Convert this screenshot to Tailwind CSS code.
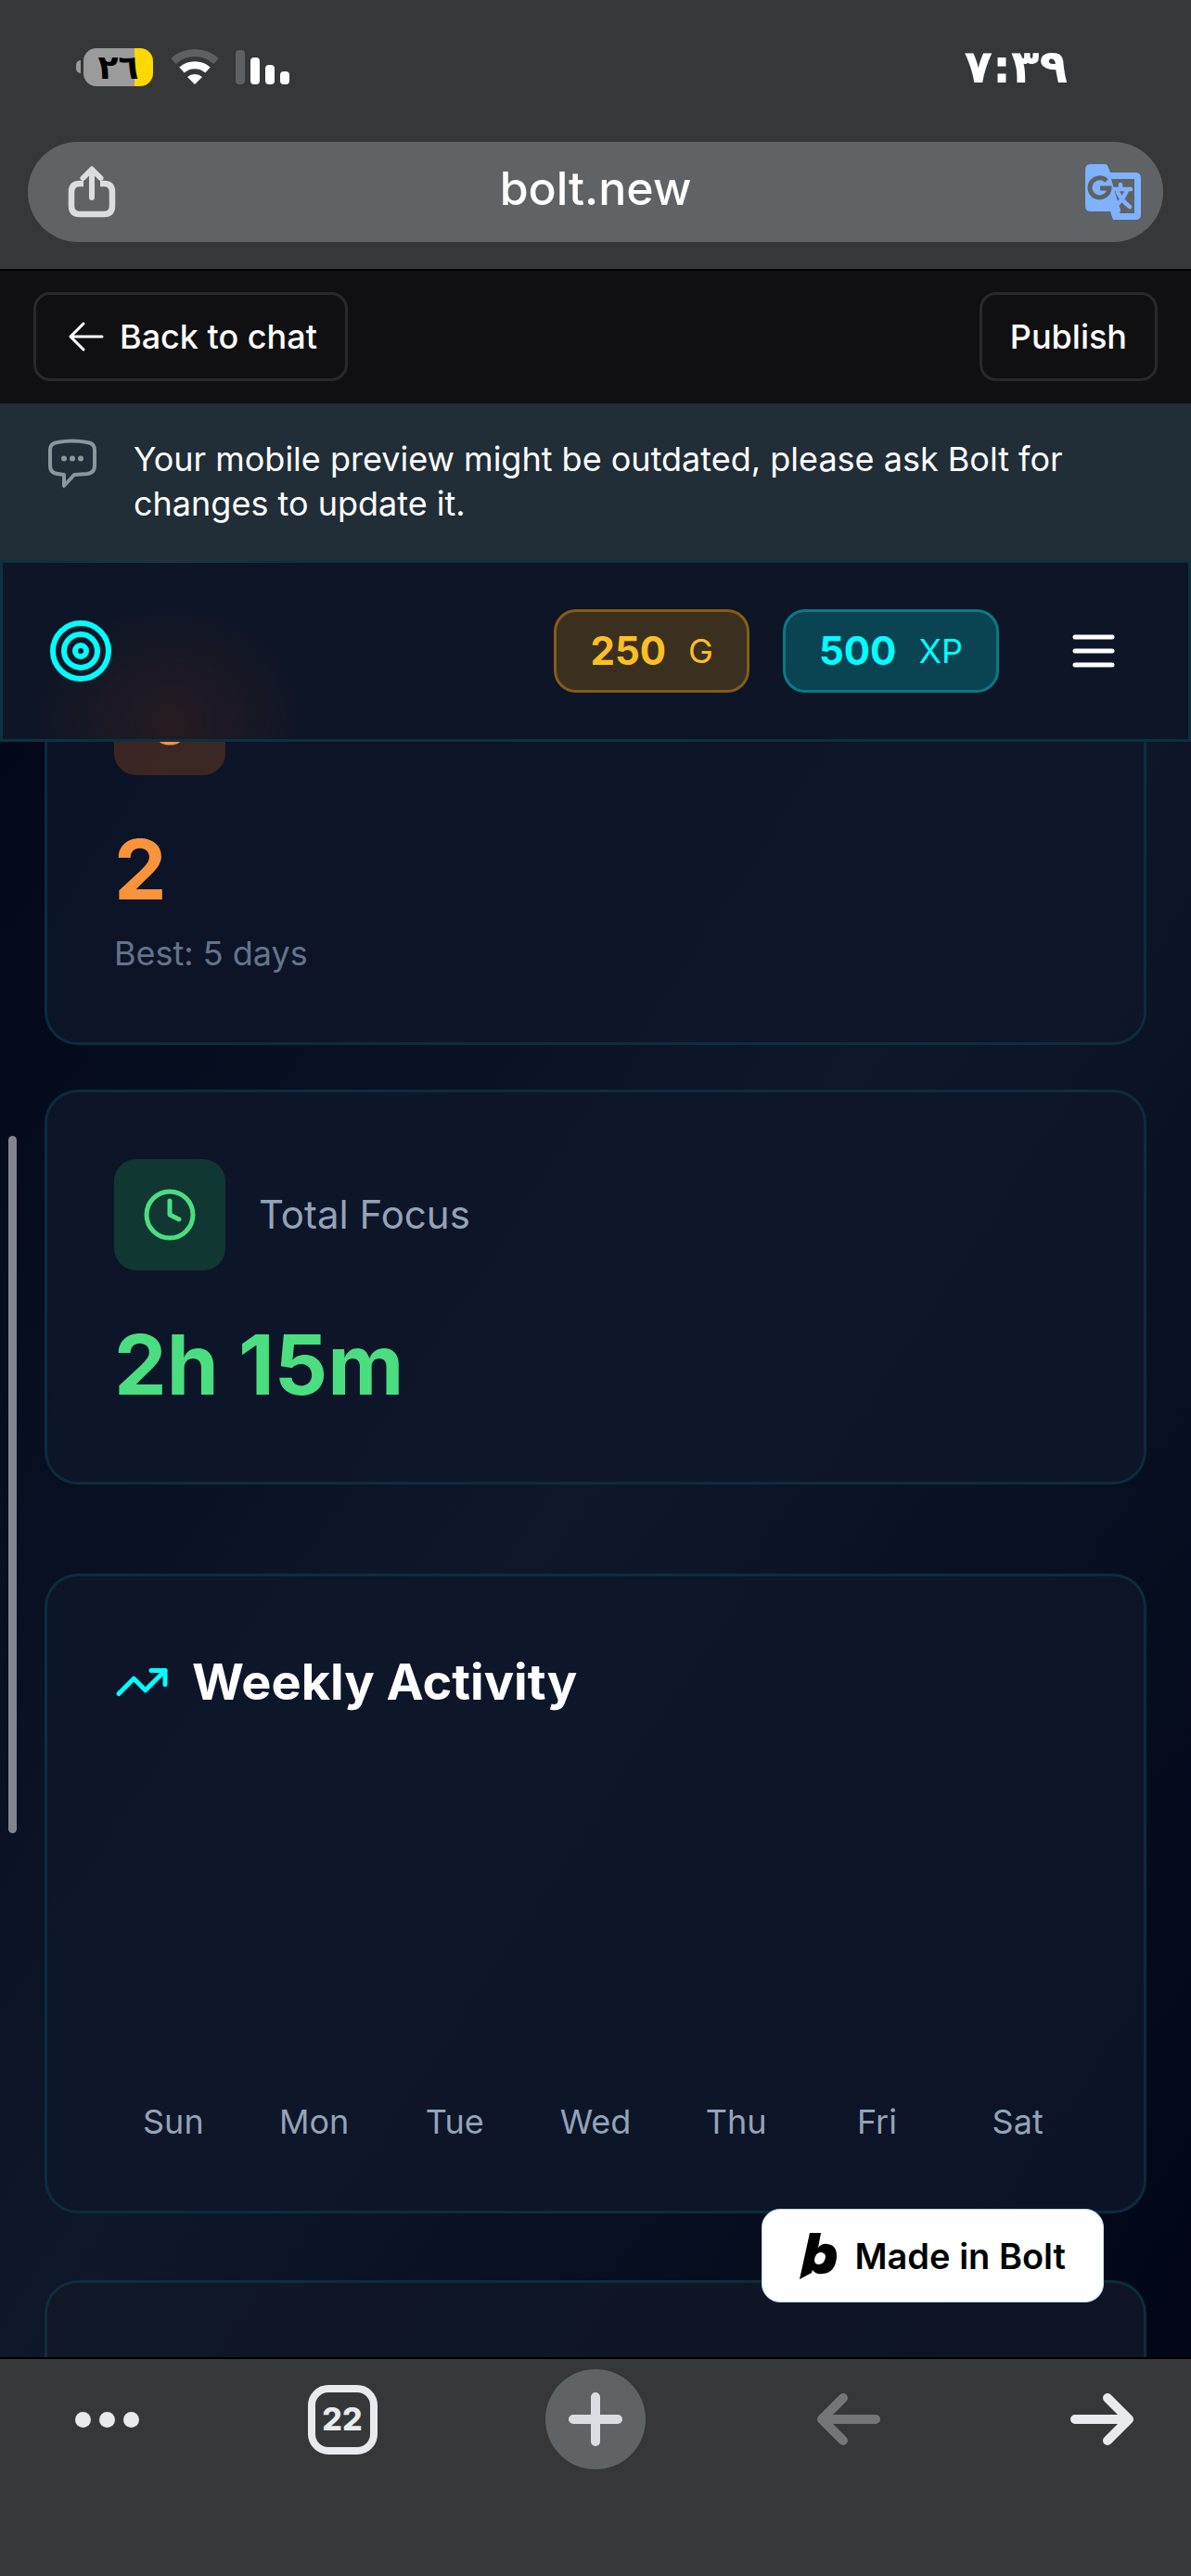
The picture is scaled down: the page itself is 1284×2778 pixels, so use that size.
<!DOCTYPE html>
<html lang="en">
<head>
    <meta charset="UTF-8">
    <meta name="viewport" content="width=device-width, initial-scale=1.0">
    <title>bolt.new</title>
    <script src="https://cdn.jsdelivr.net/npm/@tailwindcss/browser@4"></script>
</head>
<body class="bg-[#020617] font-['Inter','Liberation_Sans',sans-serif] text-white">
    <div class="flex h-screen flex-col overflow-hidden">

        <!-- Browser top: status bar + address bar -->
        <div class="border-b-2 border-black bg-[#353738] px-[30px] pb-[29px]">
            <div class="flex h-36 items-center justify-between pr-[103px] pl-[52px] font-['DejaVu_Sans',sans-serif] font-bold">
                <div class="flex items-center">
                    <span class="mr-[3px] h-[14px] w-[5px] rounded-l-full bg-[#9b9b9c]"></span>
                    <span class="flex h-[41px] w-[75px] items-center justify-center overflow-hidden rounded-[14px] bg-linear-to-r from-[#9b9b9c] from-73% to-[#ffd800] to-73% text-[36px] leading-[41px] text-black">٢٦</span>
                    <svg class="ml-[19px] h-[40px] w-[52px]" viewBox="0 0 52 40" fill="none">
                        <path d="M3 14 A34 34 0 0 1 49 14" stroke="#5f6061" stroke-width="8"/>
                        <path d="M12 23.500 A21 21 0 0 1 40 23.500" stroke="#fff" stroke-width="8"/>
                        <path d="M26 39 L18 31 A12 12 0 0 1 34 31 Z" fill="#fff"/>
                    </svg>
                    <div class="ml-[18px] flex items-end gap-[6px]">
                        <span class="h-[37px] w-[10px] rounded-[4px] bg-[#5f6061]"></span>
                        <span class="h-[29px] w-[10px] rounded-[4px] bg-white"></span>
                        <span class="h-[21px] w-[10px] rounded-[4px] bg-white"></span>
                        <span class="h-[14px] w-[10px] rounded-[4px] bg-white"></span>
                    </div>
                </div>
                <span class="text-[50px] leading-[56px]">٧:٣٩</span>
            </div>
            <div class="mt-[9px] flex h-[108px] items-center justify-between rounded-full bg-[#5f6365] pr-6 pl-[42px]">
                <button aria-label="Share">
                    <svg class="h-[58px] w-[54px]" viewBox="0 0 54 58" fill="none" stroke="#dadde1" stroke-width="6.500" stroke-linecap="round" stroke-linejoin="round">
                        <path d="M18 20 H14 Q5 20 5 29 V44 Q5 53 14 53 H40 Q49 53 49 44 V29 Q49 20 40 20 H36" stroke-linecap="butt"/>
                        <path d="M27 35 V5 M17.500 14 L27 4.500 L36.500 14" stroke-width="6"/>
                    </svg>
                </button>
                <input type="text" value="bolt.new" aria-label="Address" class="min-w-0 flex-1 bg-transparent pr-3 pb-2 text-center text-[50px] leading-[60px] font-medium outline-none">
                <button aria-label="Translate">
                    <svg class="h-[60px] w-[60px]" viewBox="0 0 60 60" fill="none">
                        <path d="M6 0 H21 Q24 0 25 4 L27 9 H54 Q60 9 60 15 V54 Q60 60 54 60 H30 L27 51 H6 Q0 51 0 45 V6 Q0 0 6 0 Z" fill="#7fb2fc"/>
                        <path d="M28 16 H53 V53 H37 L38 50 L34 38 Z" fill="#5f6365"/>
                        <path d="M28 18 L38 50 L27 51 Z" fill="#7fb2fc"/>
                        <path d="M38 22 V25 M30 27 H49 M45 28 Q42 36 35 43 M35 30 Q39 39 48 46" stroke="#7fb2fc" stroke-width="4.500" stroke-linecap="round"/>
                        <path d="M23 18 A10.500 10.500 0 1 0 26 26 H16" stroke="#5f6365" stroke-width="5"/>
                    </svg>
                </button>
            </div>
        </div>

        <!-- Preview toolbar -->
        <div class="flex items-center justify-between bg-[#101012] px-9 pt-[23px] pb-6 text-[36px] leading-[48px] font-medium">
            <button class="flex h-24 items-center gap-[15px] rounded-[18px] border-3 border-[#29292b] pr-[30px] pl-[33px]">
                <svg class="h-[42px] w-[42px]" viewBox="0 0 42 42" fill="none" stroke="currentColor" stroke-width="3" stroke-linecap="round" stroke-linejoin="round">
                    <path d="M38 21 H4 M18 7 L4 21 L18 35"/>
                </svg>
                Back to chat
            </button>
            <button class="flex h-24 items-center rounded-[18px] border-3 border-[#29292b] px-[30px]">Publish</button>
        </div>

        <div class="flex gap-[38px] bg-[#212d37] px-[50px] pt-9 pb-[37px]">
            <svg class="mt-[2px] h-[54px] w-14 shrink-0" viewBox="0 0 56 54" fill="none" stroke="#8c979d" stroke-width="4" stroke-linejoin="round">
                <path d="M12 4 Q28 1 44 4 Q52 5 52 12 V29 Q52 37 44 38 L30 39 L19 51 V39 L12 38 Q4 37 4 29 V12 Q4 5 12 4 Z"/>
                <g fill="#8c979d" stroke="none"><circle cx="19" cy="21.500" r="3"/><circle cx="28" cy="21.500" r="3"/><circle cx="37" cy="21.500" r="3"/></g>
            </svg>
            <p class="text-[36px] leading-[48px]">Your mobile preview might be outdated, please ask Bolt for changes to update it.</p>
        </div>

        <!-- App preview -->
        <main class="relative min-h-0 flex-1 overflow-hidden bg-linear-to-br from-[#020617] via-[#0f172a] to-[#020617]">
            <header class="absolute inset-x-0 top-0 z-10 flex items-center justify-between border-3 border-[#00ffff]/12 bg-[#0d1526] bg-[radial-gradient(150px_130px_at_180px_90%,#261b22,transparent)] px-12 py-[50px]">
                <svg class="h-[72px] w-[72px] text-[#00ffff]" viewBox="0 0 24 24" fill="none" stroke="currentColor" stroke-width="2">
                    <circle cx="12" cy="12" r="10"/><circle cx="12" cy="12" r="6"/><circle cx="12" cy="12" r="2"/>
                </svg>
                <div class="flex items-center gap-9">
                    <div class="flex h-[90px] items-center gap-6 rounded-3xl border-3 border-[#f59e0b]/40 bg-[#f59e0b]/20 px-9 text-[#fbbf24]">
                        <span class="text-[42px] leading-[60px] font-bold">250</span>
                        <span class="text-[36px] leading-[48px]">G</span>
                    </div>
                    <div class="flex h-[90px] items-center gap-6 rounded-3xl border-3 border-[#00ffff]/30 bg-[#00ffff]/20 px-9 text-[#00ffff]">
                        <span class="text-[42px] leading-[60px] font-bold">500</span>
                        <span class="text-[36px] leading-[48px]">XP</span>
                    </div>
                    <button class="pr-6 pl-9" aria-label="Menu">
                        <svg class="h-[60px] w-[60px]" viewBox="0 0 24 24" fill="none" stroke="currentColor" stroke-width="2" stroke-linecap="round">
                            <path d="M4 6h16M4 12h16M4 18h16"/>
                        </svg>
                    </button>
                </div>
            </header>

            <div class="flex flex-col px-12 pt-[37px]">
                <section class="rounded-[36px] border-3 border-[#00ffff]/10 bg-[#0f172a]/80 p-[72px]">
                    <div class="flex h-[120px] w-[120px] items-center justify-center rounded-3xl bg-[#f97316]/20 text-[#fb923c]">
                        <svg class="h-[60px] w-[60px]" viewBox="0 0 24 24" fill="none" stroke="currentColor" stroke-width="2" stroke-linecap="round" stroke-linejoin="round">
                            <path d="M8.500 14.500A2.500 2.500 0 0 0 11 12c0-1.380-.5-2-1-3-1.072-2.143-.224-4.054 2-6 .5 2.500 2 4.900 4 6.500 2 1.600 3 3.500 3 5.500a7 7 0 1 1-14 0c0-1.153.433-2.294 1-3a2.500 2.500 0 0 0 2.500 2.500z"/>
                        </svg>
                    </div>
                    <p class="mt-12 text-[90px] leading-[108px] font-bold text-[#fb923c]">2</p>
                    <p class="mt-3 text-[36px] leading-[48px] text-[#64748b]">Best: 5 days</p>
                </section>

                <section class="mt-12 rounded-[36px] border-3 border-[#00ffff]/10 bg-[#0f172a]/80 p-[72px]">
                    <div class="flex items-center gap-9">
                        <div class="flex h-[120px] w-[120px] items-center justify-center rounded-3xl bg-[#22c55e]/20 text-[#4ade80]">
                            <svg class="h-[60px] w-[60px]" viewBox="0 0 24 24" fill="none" stroke="currentColor" stroke-width="2" stroke-linecap="round" stroke-linejoin="round">
                                <circle cx="12" cy="12" r="10"/><path d="M12 6v6l4 2"/>
                            </svg>
                        </div>
                        <h3 class="text-[42px] leading-[60px] text-[#94a3b8]">Total Focus</h3>
                    </div>
                    <p class="mt-12 text-[90px] leading-[108px] font-bold text-[#4ade80]">2h 15m</p>
                </section>

                <section class="mt-24 rounded-[36px] border-3 border-[#00ffff]/10 bg-[#0f172a]/80 p-[72px]">
                    <h2 class="flex items-center gap-6 text-[54px] leading-[84px] font-bold">
                        <svg class="h-[60px] w-[60px] text-[#00ffff]" viewBox="0 0 24 24" fill="none" stroke="currentColor" stroke-width="2" stroke-linecap="round" stroke-linejoin="round">
                            <path d="M22 7l-8.500 8.500-5-5L2 17"/><path d="M16 7h6v6"/>
                        </svg>
                        Weekly Activity
                    </h2>
                    <div class="mt-[72px] grid h-[384px] grid-cols-7 items-end gap-6 text-center text-[36px] leading-[48px] text-[#94a3b8]">
                        <span>Sun</span>
                        <span>Mon</span>
                        <span>Tue</span>
                        <span>Wed</span>
                        <span>Thu</span>
                        <span>Fri</span>
                        <span>Sat</span>
                    </div>
                </section>

                <section class="mt-[72px] h-[400px] rounded-[36px] border-3 border-[#00ffff]/10 bg-[#111827]/80"></section>
            </div>

            <!-- Scroll indicator -->
            <div class="absolute top-[621px] left-[9px] h-[752px] w-[9px] rounded-full bg-[#82858f]"></div>

            <a href="https://bolt.new" class="absolute right-[94px] bottom-[59px] flex h-[101px] items-center gap-5 rounded-[20px] border border-blue-200 bg-white px-10 text-[38px] leading-[48px] font-semibold text-black">
                <svg class="h-[50px] w-[40px]" viewBox="0 0 40 50">
                    <path fill-rule="evenodd" d="M11 0 H23 L20 16 Q24 11 30 12 Q40 13 40 25 Q39 43 25 44 Q17 45 14 40 L13 43 L0 50 Z M22 21 Q17 22 16 29 Q16 34 21 34 Q27 33 28 26 Q28 21 22 21 Z"/>
                </svg>
                Made in Bolt
            </a>
        </main>

        <!-- Browser bottom bar -->
        <nav class="flex justify-between border-t-2 border-black bg-[#353738] px-[42px] pt-[11px] pb-[115px] text-[#e8ebed]">
            <button class="flex h-27 w-27 items-center justify-end gap-[9px]" aria-label="More">
                <span class="h-[17px] w-[17px] rounded-full bg-current"></span>
                <span class="h-[17px] w-[17px] rounded-full bg-current"></span>
                <span class="h-[17px] w-[17px] rounded-full bg-current"></span>
            </button>
            <button class="flex h-27 w-27 items-center justify-center" aria-label="Tabs">
                <span class="flex h-[75px] w-[75px] items-center justify-center rounded-[22px] border-8 border-current text-[34px] leading-[40px] font-extrabold">22</span>
            </button>
            <button class="flex h-27 w-27 items-center justify-center rounded-full bg-[#5f6365]" aria-label="New tab">
                <svg class="h-[60px] w-[60px]" viewBox="0 0 60 60" fill="none" stroke="#dadde1" stroke-width="10" stroke-linecap="round">
                    <path d="M30 6 V54 M6 30 H54"/>
                </svg>
            </button>
            <button class="flex h-27 w-27 items-center justify-center text-[#757678]" aria-label="Back">
                <svg class="h-[60px] w-[70px]" viewBox="0 0 70 60" fill="none" stroke="currentColor" stroke-width="10" stroke-linecap="round" stroke-linejoin="round">
                    <path d="M64 30 H6 M29 7 L6 30 L29 53"/>
                </svg>
            </button>
            <button class="flex h-27 w-27 items-center justify-center" aria-label="Forward">
                <svg class="h-[60px] w-[70px]" viewBox="0 0 70 60" fill="none" stroke="currentColor" stroke-width="10" stroke-linecap="round" stroke-linejoin="round">
                    <path d="M6 30 H64 M41 7 L64 30 L41 53"/>
                </svg>
            </button>
        </nav>
    </div>
</body>
</html>
